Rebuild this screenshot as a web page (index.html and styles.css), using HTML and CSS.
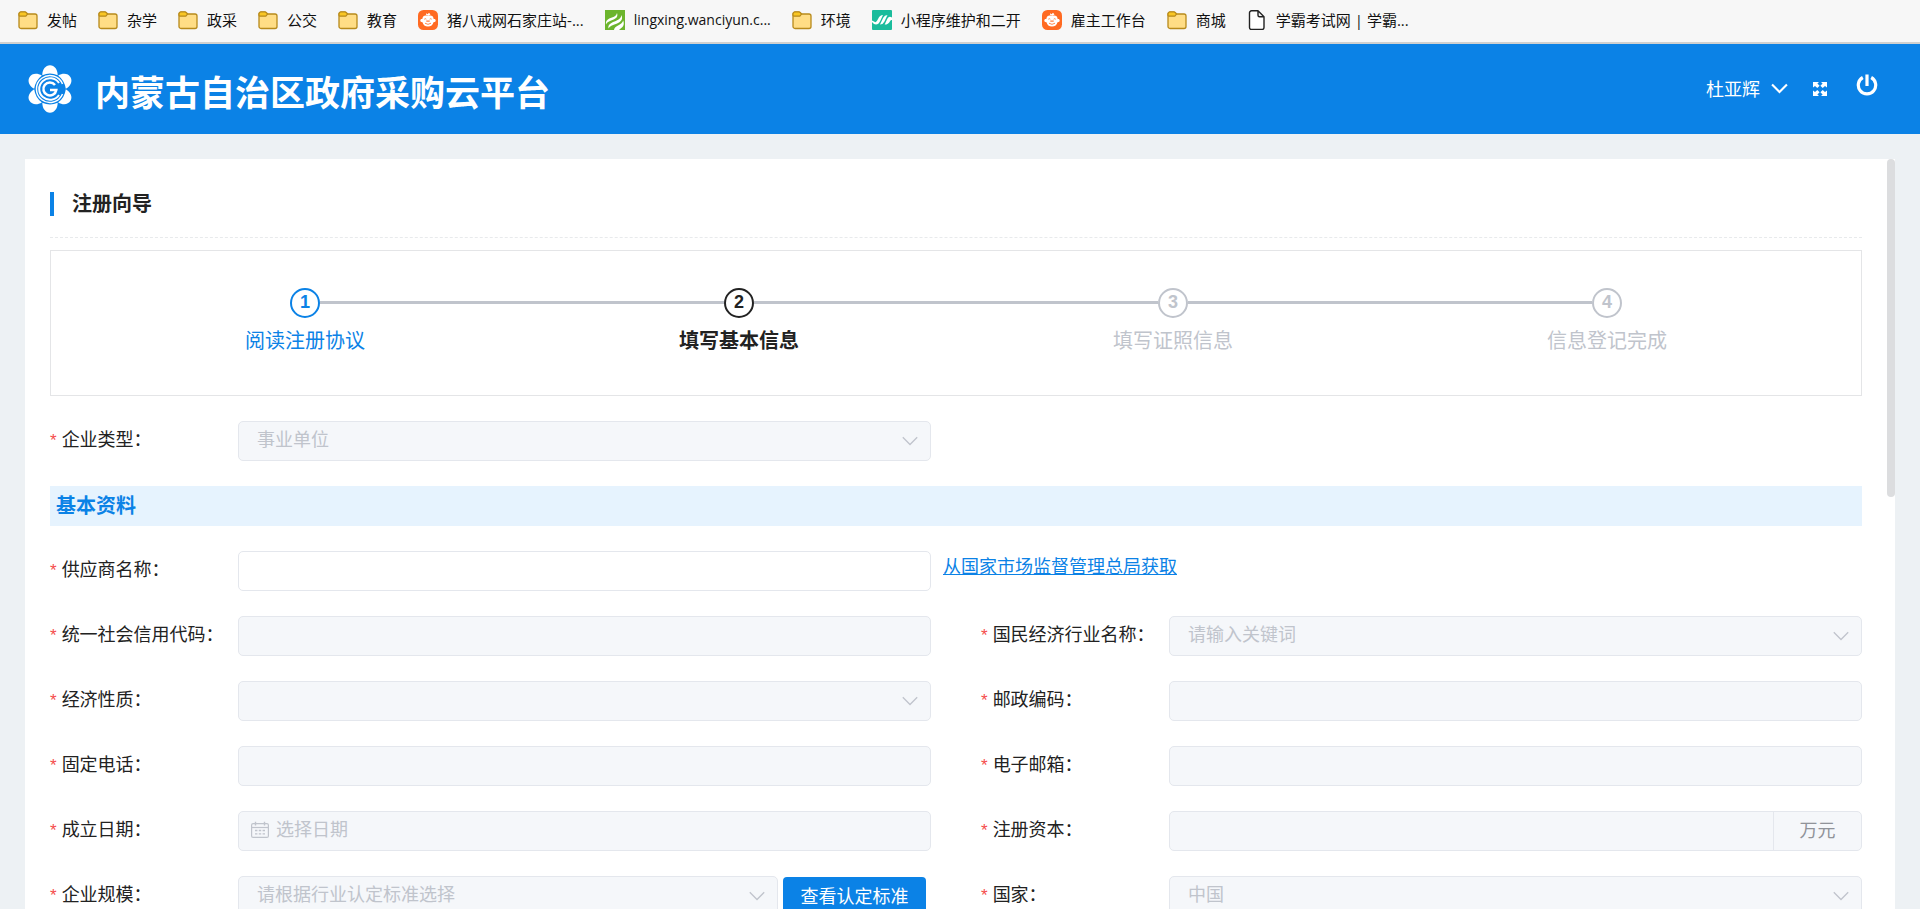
FILE: index.html
```html
<!DOCTYPE html>
<html lang="zh-CN">
<head>
<meta charset="utf-8">
<title>内蒙古自治区政府采购云平台</title>
<link rel="stylesheet" href="styles.css">
</head>
<body>
<svg class="sprite" aria-hidden="true">
  <symbol id="i-folder" viewBox="0 0 20 20">
    <path d="M1 5.500V4a2 2 0 0 1 2-2h3.800a2 2 0 0 1 1.500.700L9.500 4H17a2 2 0 0 1 2 2v10.500a2 2 0 0 1-2 2H3a2 2 0 0 1-2-2z" fill="#ffdd85" stroke="#b88a1b" stroke-width="1.300"/>
    <path d="M1 5V4a2 2 0 0 1 2-2h3.800a2 2 0 0 1 1.500.700L9.500 4 8.300 5.600a1.500 1.500 0 0 1-1.200.600H2.200A1.200 1.200 0 0 1 1 5z" fill="#f9c622" stroke="#b88a1b" stroke-width="1.200"/>
  </symbol>
  <symbol id="i-pig" viewBox="0 0 20 20">
    <rect width="20" height="20" rx="5.500" fill="#ff6a22"/>
    <path d="M5.500 6.300C7 5 8.300 5.800 10 5.800s3-.800 4.500.500c.8.700.9 1.800 1.200 2.800 1.300-.300 2 .4 2 1.400s-.9 1.800-2.200 1.700C14.900 15 12.900 16.600 10 16.600S5.100 15 4.500 12.200c-1.300.100-2.200-.700-2.200-1.700s.700-1.700 2-1.400c.3-1 .4-2.100 1.200-2.800zM8 3.200l1.600 1L11 2.800l1.500 1.700-2 .9-2.300-.3z" fill="#fff"/>
    <path d="M6.300 9.200q1-1 2 0M11.700 9.200q1-1 2 0M7 13.200q3 2.300 6 0" fill="none" stroke="#ff6a22" stroke-width=".8"/>
    <path d="M8.300 11.100h3.400" stroke="#ff6a22" stroke-width="1.100"/>
  </symbol>
  <symbol id="i-chevron" viewBox="0 0 16 16">
    <path d="M.8 4.300L8 11.500l7.200-7.200" fill="none" stroke="currentColor" stroke-width="1.300"/>
  </symbol>
</svg>

<nav class="bookmarks" aria-label="书签栏">
  <a class="bookmark" href="#"><svg><use href="#i-folder"/></svg>发帖</a>
  <a class="bookmark" href="#"><svg><use href="#i-folder"/></svg>杂学</a>
  <a class="bookmark" href="#"><svg><use href="#i-folder"/></svg>政采</a>
  <a class="bookmark" href="#"><svg><use href="#i-folder"/></svg>公交</a>
  <a class="bookmark" href="#"><svg><use href="#i-folder"/></svg>教育</a>
  <a class="bookmark" href="#"><svg><use href="#i-pig"/></svg>猪八戒网石家庄站-...</a>
  <a class="bookmark latin" href="#"><svg viewBox="0 0 20 20"><path d="M0 0h20v20H0z" fill="#6cb52d"/><path d="M1 14.500C.5 10 3 9 7 7.500c3-1 4.500-2.300 5-4.500 1.200 3.500-.5 5.300-4 6.800C4.500 11.300 2 12 1 14.500zM3.500 18.500c-.7-4 2-5.300 6-7 3.700-1.500 6.500-3 7-6.500 1.700 4.500-.5 6.700-5 8.700-4 1.700-7 2.300-8 4.800zM9 20c.2-2.500 2-3.500 4.500-4.800 2.500-1.200 4-2.400 4.700-4.700 1.300 3.800.3 6-2 7.500L14 20z" fill="#fff"/></svg>lingxing.wanciyun.c...</a>
  <a class="bookmark" href="#"><svg><use href="#i-folder"/></svg>环境</a>
  <a class="bookmark" href="#"><svg viewBox="0 0 20 20"><rect width="20" height="20" rx="1" fill="#1abc9c"/><path d="M0 10.500l3.500 1.800Q5 11.500 6.300 8.500 7.800 5 11 5L8.200 11Q6.500 14.600 4 14.600 2 14.600 0 12zM8 14.600l3.200-6.800Q12.500 5 15.500 5l-3.200 6.800Q11 14.600 8 14.600zM12.700 14.600L15.500 8.500Q17 5.500 20 7.500V10q-1.200-.3-2 1.200-1.700 3.400-5.300 3.400z" fill="#fff"/></svg>小程序维护和二开</a>
  <a class="bookmark" href="#"><svg><use href="#i-pig"/></svg>雇主工作台</a>
  <a class="bookmark" href="#"><svg><use href="#i-folder"/></svg>商城</a>
  <a class="bookmark" href="#"><svg viewBox="0 0 20 20"><path d="M4.500.8H11L17 6.800v10.700a2 2 0 0 1-2 2H4.500a2 2 0 0 1-2-2V2.800a2 2 0 0 1 2-2zM11 .8v4.500a1.500 1.500 0 0 0 1.500 1.500H17" fill="#fff" stroke="#222" stroke-width="1.400" stroke-linejoin="round"/></svg>学霸考试网 | 学霸...</a>
</nav>

<header class="header">
  <svg class="logo" viewBox="0 0 48 48" aria-hidden="true">
    <g fill="#fff">
      <path d="M16.300 10.200C16.300 4.500 19.500.3 24 .3s7.700 4.200 7.700 9.900q-7.700-3.200-15.400 0z"/>
      <path d="M16.300 10.200C16.300 4.500 19.500.3 24 .3s7.700 4.200 7.700 9.900q-7.700-3.200-15.400 0z" transform="rotate(60 24 24)"/>
      <path d="M16.300 10.200C16.300 4.500 19.500.3 24 .3s7.700 4.200 7.700 9.900q-7.700-3.200-15.400 0z" transform="rotate(120 24 24)"/>
      <path d="M16.300 10.200C16.300 4.500 19.500.3 24 .3s7.700 4.200 7.700 9.900q-7.700-3.200-15.400 0z" transform="rotate(180 24 24)"/>
      <path d="M16.300 10.200C16.300 4.500 19.500.3 24 .3s7.700 4.200 7.700 9.900q-7.700-3.200-15.400 0z" transform="rotate(240 24 24)"/>
      <path d="M16.300 10.200C16.300 4.500 19.500.3 24 .3s7.700 4.200 7.700 9.900q-7.700-3.200-15.400 0z" transform="rotate(300 24 24)"/>
    </g>
    <g fill="none" stroke="#fff">
      <path d="M36.500 19A13.500 13.500 0 1 0 36.500 29" stroke-width="1.500"/>
      <path d="M33 18A10.800 10.800 0 1 0 33 30" stroke-width="2"/>
      <path d="M29 20A6.500 6.500 0 1 0 30.300 25H24" stroke-width="2.500"/>
    </g>
  </svg>
  <h1 class="brand">内蒙古自治区政府采购云平台</h1>
  <div class="tools">
    <button class="tool user" type="button">杜亚辉<svg viewBox="0 0 16 16"><path d="M1 4.300l7 7 7-7" fill="none" stroke="#fff" stroke-width="2"/></svg></button>
    <button class="tool full" type="button" aria-label="全屏"><svg viewBox="0 0 14 14" fill="#fff"><path d="M0 0h6L4.400 1.600l2.200 2.200-2.300 2.300L2 3.900 0 5.600zM14 0H8l1.600 1.600-2.200 2.200 2.300 2.300L12 3.900l2 1.700zM0 14h6l-1.600-1.600 2.200-2.200-2.300-2.300L2 10.100 0 8.400zM14 14H8l1.600-1.600-2.200-2.200 2.300-2.300 2.300 2.200 2-1.700z"/></svg></button>
    <button class="tool power" type="button" aria-label="退出"><svg viewBox="0 0 22 22" fill="none" stroke="#fff" stroke-width="3.200"><path d="M11 .5v11.500M6.800 3.500a8.700 8.700 0 1 0 8.400 0"/></svg></button>
  </div>
</header>

<main class="main">
  <div class="card">
    <h2 class="card-title">注册向导</h2>

    <ol class="steps">
      <li class="step done"><span class="dot">1</span><span class="step-name">阅读注册协议</span></li>
      <li class="step current"><span class="dot">2</span><span class="step-name">填写基本信息</span></li>
      <li class="step"><span class="dot">3</span><span class="step-name">填写证照信息</span></li>
      <li class="step"><span class="dot">4</span><span class="step-name">信息登记完成</span></li>
    </ol>

    <form class="form">
      <div class="field">
        <label for="f-type">企业类型：</label>
        <span class="select"><select id="f-type" disabled><option>事业单位</option></select><svg><use href="#i-chevron"/></svg></span>
      </div>

      <h3 class="section">基本资料</h3>

      <div class="field">
        <label for="f-name">供应商名称：</label>
        <input class="input" id="f-name" type="text">
      </div>
      <a class="fetch" href="#">从国家市场监督管理总局获取</a>

      <div class="field">
        <label for="f-code">统一社会信用代码：</label>
        <input class="input" id="f-code" type="text" disabled>
      </div>
      <div class="field">
        <label for="f-industry">国民经济行业名称：</label>
        <span class="select"><select id="f-industry" disabled><option>请输入关键词</option></select><svg><use href="#i-chevron"/></svg></span>
      </div>

      <div class="field">
        <label for="f-nature">经济性质：</label>
        <span class="select"><select id="f-nature" disabled><option></option></select><svg><use href="#i-chevron"/></svg></span>
      </div>
      <div class="field">
        <label for="f-zip">邮政编码：</label>
        <input class="input" id="f-zip" type="text" disabled>
      </div>

      <div class="field">
        <label for="f-phone">固定电话：</label>
        <input class="input" id="f-phone" type="text" disabled>
      </div>
      <div class="field">
        <label for="f-mail">电子邮箱：</label>
        <input class="input" id="f-mail" type="email" disabled>
      </div>

      <div class="field">
        <label for="f-date">成立日期：</label>
        <span class="date"><svg viewBox="0 0 18 18" fill="none" stroke="currentColor"><rect x=".6" y="2.600" width="16.800" height="13.800" rx="1.500" stroke-width="1.200"/><path d="M.6 6.500h16.800" stroke-width="1.200"/><path d="M4.500.8v3.600M13.500.8v3.600" stroke-width="1.400"/><path d="M4 9.500h2.400M7.800 9.500h2.400M11.600 9.500H14M4 12.800h2.400M7.800 12.800h2.400M11.600 12.800H14" stroke-width="1.300"/></svg><input id="f-date" type="text" placeholder="选择日期" disabled></span>
      </div>
      <div class="field">
        <label for="f-capital">注册资本：</label>
        <span class="addon"><input id="f-capital" type="text" disabled><span class="unit">万元</span></span>
      </div>

      <div class="field">
        <label for="f-scale">企业规模：</label>
        <span class="pair">
          <span class="select"><select id="f-scale" disabled><option>请根据行业认定标准选择</option></select><svg><use href="#i-chevron"/></svg></span>
          <button class="primary" type="button">查看认定标准</button>
        </span>
      </div>
      <div class="field">
        <label for="f-country">国家：</label>
        <span class="select"><select id="f-country" disabled><option>中国</option></select><svg><use href="#i-chevron"/></svg></span>
      </div>
    </form>
    <div class="scroll-thumb"></div>
  </div>
</main>
</body>
</html>
```
FILE: styles.css
```css
* {
  box-sizing: border-box;
}

body {
  display: flex;
  flex-direction: column;
  height: 100vh;
  margin: 0;
  overflow: hidden;
  background: #edf1f4;
  color: #222;
  font-family: "Liberation Sans", "Noto Sans CJK SC", sans-serif;
  font-size: 18px;
}

button,
input,
select {
  margin: 0;
  font: inherit;
}

.sprite {
  display: none;
}

/* Bookmarks bar */
.bookmarks {
  display: flex;
  flex: none;
  gap: 21px;
  height: 44px;
  padding: 0 18px 3px;
  border-bottom: 2px solid #d0d0d0;
  background: #f7f7f7;
  overflow: hidden;
}

.bookmark {
  display: flex;
  align-items: center;
  gap: 9px;
  color: #111;
  font-family: "Open Sans", "Noto Sans CJK SC", sans-serif;
  font-size: 15px;
  line-height: 20px;
  text-decoration: none;
  white-space: nowrap;
}

.latin {
  font-size: 14px;
}

.bookmark svg {
  width: 20px;
  height: 20px;
}

/* Header */
.header {
  display: flex;
  flex: none;
  align-items: center;
  height: 90px;
  padding: 0 42px 0 25px;
  background: #0b82e6;
  color: #fff;
}

.logo {
  width: 50px;
  height: 48px;
}

.brand {
  margin: 0 0 0 20px;
  padding-top: 10px;
  font-size: 35px;
  font-weight: 700;
  line-height: 52px;
}

.tools {
  display: flex;
  align-items: center;
  margin-left: auto;
}

.tool {
  display: flex;
  align-items: center;
  padding: 0;
  border: 0;
  background: none;
  color: inherit;
}

.user {
  gap: 11px;
  padding-bottom: 2px;
}

.user svg {
  width: 17px;
  height: 17px;
}

.full {
  margin-left: 25px;
}

.full svg {
  width: 14px;
  height: 14px;
}

.power {
  margin-left: 29px;
  padding-bottom: 8px;
}

.power svg {
  width: 22px;
  height: 22px;
}

/* Card */
.main {
  flex: 1;
  min-height: 0;
  padding: 25px 25px 0;
}

.card {
  position: relative;
  height: 100%;
  padding: 25px 33px 0 25px;
  background: #fff;
  overflow: hidden;
}

.scroll-thumb {
  position: absolute;
  top: 0;
  right: 0;
  width: 8px;
  height: 45%;
  border-radius: 4px;
  background: #dcdddf;
}

.card-title {
  display: flex;
  align-items: center;
  gap: 18px;
  height: 54px;
  margin: 0 0 12px;
  padding-bottom: 13px;
  border-bottom: 1px dashed #e8eaec;
  font-size: 20px;
  line-height: 24px;
}

.card-title::before {
  width: 4px;
  height: 24px;
  background: #0b82e6;
  content: "";
}

/* Steps */
.steps {
  display: flex;
  height: 146px;
  margin: 0 0 25px;
  padding: 37px;
  border: 1px solid #e4e5e7;
  list-style: none;
}

.step {
  display: grid;
  flex: 1;
  grid-template-columns: 1fr 30px 1fr;
  grid-template-rows: 30px auto;
  align-items: center;
  align-content: start;
  row-gap: 8px;
  color: #c0c4cc;
}

.step::before,
.step::after {
  grid-row: 1;
  height: 3px;
  margin-bottom: 1px;
  background: #c0c4cc;
  content: "";
}

.step::before {
  grid-column: 1;
}

.step::after {
  grid-column: 3;
}

.step:first-child::before,
.step:last-child::after {
  background: none;
}

.dot {
  grid-column: 2;
  grid-row: 1;
  height: 30px;
  border: 2px solid currentColor;
  border-radius: 50%;
  font-size: 18px;
  font-weight: 700;
  line-height: 24px;
  text-align: center;
}

.step-name {
  grid-column: 1 / -1;
  font-size: 20px;
  line-height: 30px;
  text-align: center;
}

.done {
  color: #0b82e6;
}

.current {
  color: #222;
  font-weight: 700;
}

/* Form */
.form {
  display: grid;
  grid-template-columns: 1fr 1fr;
  gap: 25px 50px;
}

.section {
  grid-column: 1 / -1;
  height: 40px;
  margin: 0;
  padding-left: 6px;
  background: #e6f3fe;
  color: #0b82e6;
  font-size: 20px;
  line-height: 40px;
}

.field {
  display: grid;
  grid-column-start: auto;
  grid-template-columns: 188px minmax(0, 1fr);
  grid-template-rows: 40px;
}

.field label {
  line-height: 38px;
  white-space: nowrap;
}

.field label::before {
  margin-right: 5px;
  color: #f54c4c;
  font-size: 17px;
  content: "*";
}

.fetch {
  justify-self: start;
  margin-left: -38px;
  color: #0b82e6;
  line-height: 32px;
}

.input,
.select select,
.date,
.addon {
  width: 100%;
  height: 40px;
  border: 1px solid #e4e7ed;
  border-radius: 5px;
  background: #f5f7fa;
  color: #c0c4cc;
  opacity: 1;
}

.input {
  padding: 0 19px;
  background: #fff;
  color: #222;
}

.input:disabled {
  background: #f5f7fa;
}

.select {
  display: grid;
  grid-template-rows: 40px;
  align-items: center;
  color: #c0c4cc;
}

.select select {
  grid-area: 1 / 1;
  padding: 0 45px 2px 18px;
  appearance: none;
}

.select svg {
  grid-area: 1 / 1;
  justify-self: end;
  width: 16px;
  height: 16px;
  margin-right: 13px;
  pointer-events: none;
}

.date {
  display: flex;
  align-items: center;
  gap: 7px;
  padding: 0 0 2px 12px;
}

.date svg {
  width: 18px;
  height: 18px;
}

.date input,
.addon input {
  flex: 1;
  min-width: 0;
  padding: 0;
  border: 0;
  background: none;
}

.date input::placeholder {
  color: #c0c4cc;
  opacity: 1;
}

.addon {
  display: flex;
}

.unit {
  width: 88px;
  border-left: 1px solid #e4e7ed;
  color: #909399;
  line-height: 38px;
  text-align: center;
}

.pair {
  display: flex;
  align-items: start;
  gap: 5px;
  padding-right: 5px;
}

.pair .select {
  flex: 1;
}

.primary {
  width: 143px;
  height: 40px;
  margin-top: 1px;
  padding: 0 0 4px;
  border: 0;
  border-radius: 4px;
  background: #0b82e6;
  color: #fff;
}
```
